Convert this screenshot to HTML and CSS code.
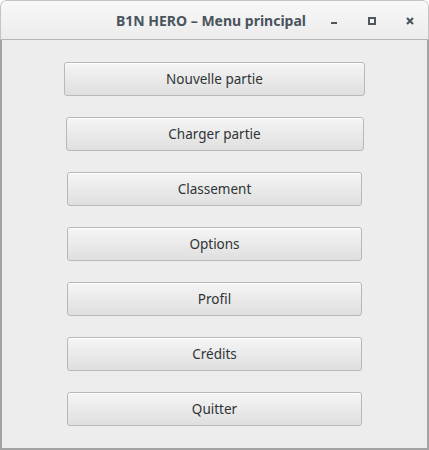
FILE: index.html
```html
<!DOCTYPE html>
<html lang="fr">
<head>
<meta charset="utf-8">
<title>B1N HERO – Menu principal</title>
<link rel="stylesheet" href="styles.css">
</head>
<body>
<div class="window">
  <header class="titlebar">
    <span class="title">B1N HERO – Menu principal</span>
    <div class="controls">
      <span class="ctl"><svg width="8" height="8" viewBox="0 0 8 8"><rect x="1" y="5" width="6" height="2" fill="#4c5760"/></svg></span>
      <span class="ctl"><svg width="8" height="8" viewBox="0 0 8 8"><rect x="1" y="1" width="6" height="6" fill="none" stroke="#4c5760" stroke-width="2"/></svg></span>
      <span class="ctl"><svg width="8" height="8" viewBox="0 0 8 8"><path d="M1 1L7 7M7 1L1 7" stroke="#4c5760" stroke-width="2.2" stroke-linecap="butt"/></svg></span>
    </div>
  </header>
  <main class="content">
    <button class="btn w1">Nouvelle partie</button>
    <button class="btn w2">Charger partie</button>
    <button class="btn w3">Classement</button>
    <button class="btn w3">Options</button>
    <button class="btn w3">Profil</button>
    <button class="btn w3">Crédits</button>
    <button class="btn w3">Quitter</button>
  </main>
</div>
</body>
</html>
```

FILE: styles.css
```css
* { box-sizing: border-box; }
html, body { margin: 0; padding: 0; background: #ffffff; }
body { width: 429px; height: 450px; overflow: hidden; }

.window {
  width: 429px;
  height: 450px;
  display: flex;
  flex-direction: column;
  border-radius: 6px 6px 0 0;
  overflow: hidden;
  font-family: "Noto Sans", "DejaVu Sans", sans-serif;
}

.titlebar {
  height: 40px;
  flex: none;
  display: flex;
  align-items: center;
  justify-content: flex-end;
  background: linear-gradient(#f8f8f8, #ececec);
  border: 1px solid #c4c4c4;
  border-bottom: 1px solid #b6b6b6;
  border-radius: 6px 6px 0 0;
  padding-right: 0;
}

.title {
  font-size: 14px;
  font-weight: bold;
  color: #4a545d;
  padding-right: 9px;
  padding-top: 1px;
}

.controls { display: flex; height: 100%; }
.ctl {
  width: 38px;
  display: flex;
  align-items: center;
  justify-content: center;
  padding-top: 2px;
}
.ctl:last-child { width: 37px; }

.content {
  flex: 1;
  background: #ededed;
  border-left: 2px solid #a3a3a3;
  border-right: 2px solid #a3a3a3;
  border-bottom: 2px solid #a3a3a3;
  display: flex;
  flex-direction: column;
  align-items: center;
  padding-top: 22px;
  gap: 21px;
}

.btn {
  height: 34px;
  border: 1px solid #b8b8b8;
  border-radius: 3px;
  background: linear-gradient(#f5f5f5, #dfdfdf);
  font-family: "Noto Sans", "DejaVu Sans", sans-serif;
  font-size: 13.5px;
  color: #2e3436;
  padding: 0;
  box-shadow: inset 0 1px 0 #ffffff;
}
.w1 { width: 301px; }
.w2 { width: 298px; }
.w3 { width: 295px; }
```
